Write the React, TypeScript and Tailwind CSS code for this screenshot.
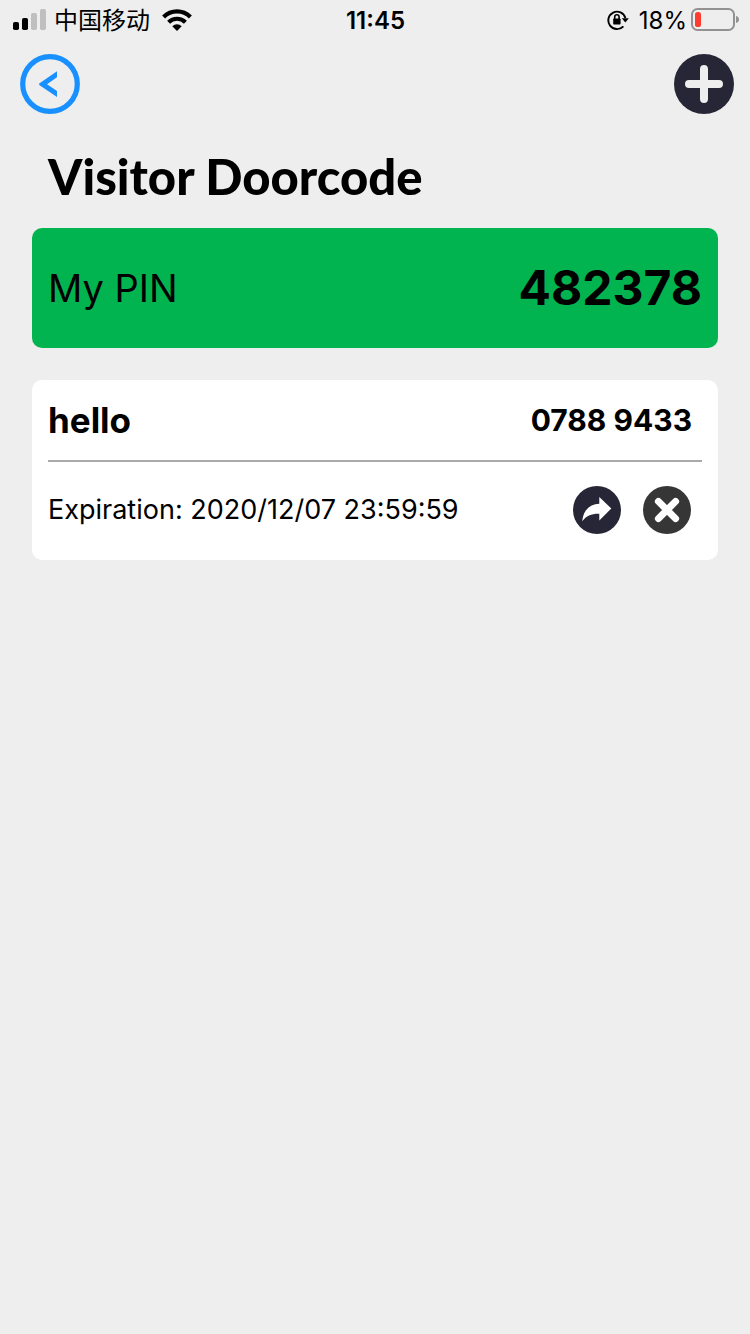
const visitors = [
  { id: 1, name: 'hello', code: '0788 9433', expiration: '2020/12/07 23:59:59' },
];

const SignalIcon = () => (
  <svg className="h-6 w-[34px]" viewBox="0 0 34 24" aria-hidden="true">
    <rect x="1" y="14" width="6" height="8" rx="1.8" />
    <rect x="10" y="10" width="6" height="12" rx="1.8" />
    <rect x="19" y="5" width="6" height="17" rx="1.8" fill="#bfbfbf" />
    <rect x="28" y="1" width="6" height="21" rx="1.8" fill="#bfbfbf" />
  </svg>
);

const WifiIcon = () => (
  <svg className="h-6 w-[30px]" viewBox="0 0 30 24" aria-hidden="true">
    <g fill="none" stroke="#000" strokeWidth="4.2">
      <path d="M1.6 9 A19 19 0 0 1 28.4 9" />
      <path d="M6.6 14.2 A12 12 0 0 1 23.4 14.2" />
    </g>
    <path d="M10.3 18.2 A6.8 6.8 0 0 1 19.7 18.2 L15 23 Z" />
  </svg>
);

const RotationLockIcon = () => (
  <svg className="h-[22px] w-[22px]" viewBox="0 0 22 22" aria-hidden="true">
    <path
      d="M16.4 17.3 A8.7 8.7 0 1 1 18.4 9"
      fill="none"
      stroke="#000"
      strokeWidth="1.9"
    />
    <path d="M14.8 9.3 H21.8 L18.3 13.6 Z" />
    <rect x="6.2" y="9.4" width="7.4" height="6.2" rx="0.8" />
    <path d="M7.7 10 V8 A2.2 2.2 0 0 1 12.1 8 V10" fill="none" stroke="#000" strokeWidth="1.6" />
  </svg>
);

const BatteryIcon = () => (
  <svg className="h-6 w-12" viewBox="0 0 48 24" aria-hidden="true">
    <rect x="1" y="1" width="42" height="21" rx="5.5" fill="none" stroke="#929292" strokeWidth="2" />
    <rect x="4" y="4" width="6" height="15" rx="2.6" fill="#ff3b30" />
    <path d="M45 8 Q48 8.8 48 11.5 Q48 14.2 45 15 Z" fill="#929292" />
  </svg>
);

const StatusBar = () => (
  <div className="grid h-10 grid-cols-3 items-center pl-3 pr-[11px] text-2xl">
    <div className="flex items-center">
      <SignalIcon />
      <span className="ml-2 mr-3 pt-0.5">中国移动</span>
      <WifiIcon />
    </div>
    <div className="pt-0.5 text-center font-semibold">11:45</div>
    <div className="flex items-center justify-end">
      <RotationLockIcon />
      <span className="ml-2.5 mr-1 pt-0.5">18%</span>
      <BatteryIcon />
    </div>
  </div>
);

const BackIcon = () => (
  <svg className="h-15 w-15" viewBox="0 0 60 60" aria-hidden="true">
    <circle cx="30" cy="30" r="27.3" fill="none" stroke="#1890ff" strokeWidth="5.2" />
    <path d="M37 17.2 V23.2 L27 30.2 L37 37 V43 L19.2 30.9 V29.4 Z" fill="#1890ff" />
  </svg>
);

const PlusIcon = () => (
  <svg className="h-15 w-15" viewBox="0 0 60 60" aria-hidden="true">
    <circle cx="30" cy="30" r="30" fill="#272636" />
    <path d="M30 15 V45 M15 30 H45" stroke="#eee" strokeWidth="8" strokeLinecap="round" />
  </svg>
);

const ShareIcon = () => (
  <svg className="h-12 w-12" viewBox="0 0 48 48" aria-hidden="true">
    <circle cx="24" cy="24" r="24" fill="#272636" />
    <path d="M26.3 11 L38.3 22.6 L26.3 34.4 V27.8 C18.5 27.6 13.5 29.6 9.2 35.3 C10.2 24.5 16.2 18.3 26.3 17.8 Z" fill="#fff" />
  </svg>
);

const DeleteIcon = () => (
  <svg className="h-12 w-12" viewBox="0 0 48 48" aria-hidden="true">
    <circle cx="24" cy="24" r="24" fill="#363636" />
    <path d="M15.4 15.4 L32.6 32.6 M32.6 15.4 L15.4 32.6" stroke="#fff" strokeWidth="7" strokeLinecap="round" />
  </svg>
);

const App = () => {
  return (
    <div className="min-h-screen bg-[#eee] font-['Inter','Noto_Sans_CJK_SC',sans-serif] text-black">
      <StatusBar />

      <header className="flex justify-between pl-5 pr-4 pt-3.5">
        <button type="button" aria-label="Back">
          <BackIcon />
        </button>
        <button type="button" aria-label="Add visitor">
          <PlusIcon />
        </button>
      </header>

      <main className="px-8 pt-[30px]">
        <h1 className="px-4 font-['Lato',sans-serif] text-[49px] font-black leading-16">
          Visitor Doorcode
        </h1>

        <section className="mt-5 flex h-30 items-center justify-between rounded-[10px] bg-[#02b44f] px-4">
          <span className="text-[38px]">My PIN</span>
          <span className="text-5xl font-bold">482378</span>
        </section>

        {visitors.map((visitor) => (
          <article key={visitor.id} className="mt-8 rounded-[10px] bg-white px-4 pb-0.5">
            <div className="flex h-[82px] items-center justify-between border-b-2 border-[#aaa] pr-2.5">
              <h2 className="text-[35px] font-bold">{visitor.name}</h2>
              <span className="text-3xl font-bold">{visitor.code}</span>
            </div>
            <div className="flex h-24 items-center justify-between pr-[11px]">
              <p className="text-[27px]">Expiration: {visitor.expiration}</p>
              <div className="flex gap-[22px]">
                <button type="button" aria-label="Share">
                  <ShareIcon />
                </button>
                <button type="button" aria-label="Delete">
                  <DeleteIcon />
                </button>
              </div>
            </div>
          </article>
        ))}
      </main>
    </div>
  );
};

export default App;
